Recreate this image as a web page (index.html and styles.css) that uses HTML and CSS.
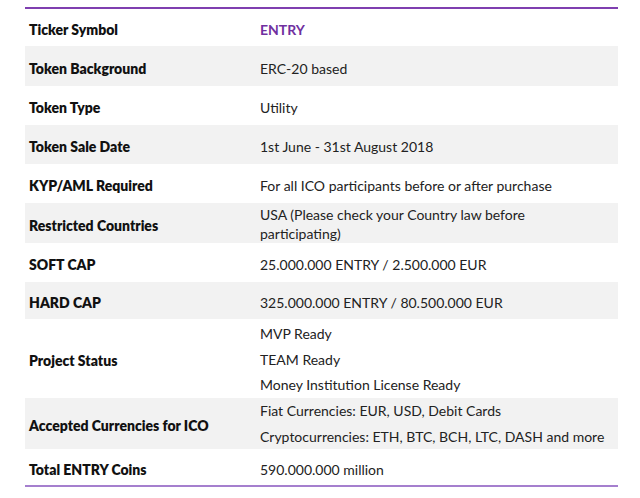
FILE: index.html
```html
<!DOCTYPE html>
<html>
<head>
<meta charset="utf-8">
<link rel="stylesheet" href="styles.css">
</head>
<body>
<table class="info">
  <tr class="r1"><th>Ticker Symbol</th><td class="accent">ENTRY</td></tr>
  <tr class="r2 alt"><th>Token Background</th><td>ERC-20 based</td></tr>
  <tr class="r3"><th>Token Type</th><td>Utility</td></tr>
  <tr class="r4 alt"><th>Token Sale Date</th><td>1st June - 31st August 2018</td></tr>
  <tr class="r5"><th>KYP/AML Required</th><td>For all ICO participants before or after purchase</td></tr>
  <tr class="r6 alt"><th>Restricted Countries</th><td class="multi"><div class="ln">USA (Please check your Country law before</div><div class="ln">participating)</div></td></tr>
  <tr class="r7"><th>SOFT CAP</th><td>25.000.000 ENTRY / 2.500.000 EUR</td></tr>
  <tr class="r8 alt"><th>HARD CAP</th><td>325.000.000 ENTRY / 80.500.000 EUR</td></tr>
  <tr class="r9"><th>Project Status</th><td class="multi"><div class="ml">MVP Ready</div><div class="ml">TEAM Ready</div><div class="ml">Money Institution License Ready</div></td></tr>
  <tr class="r10 alt"><th>Accepted Currencies for ICO</th><td class="multi flush"><div class="ml">Fiat Currencies: EUR, USD, Debit Cards</div><div class="ml">Cryptocurrencies: ETH, BTC, BCH, LTC, DASH and more</div></td></tr>
  <tr class="r11 last"><th>Total ENTRY Coins</th><td>590.000.000 million</td></tr>
</table>
</body>
</html>
```
FILE: styles.css
```css
html, body {
  margin: 0;
  padding: 0;
  background: #fff;
}
body {
  padding: 7px 0 0 25px;
  font-family: Lato, "Open Sans", sans-serif;
  font-size: 14px;
  color: #1a1a1a;
}
.info {
  width: 593px;
  border-collapse: collapse;
  border-top: 2px solid #7f3fb0;
  border-bottom: 2px solid #a57fce;
}
.info th, .info td {
  padding: 4px 4px 0;
  text-align: left;
  vertical-align: middle;
}
.info td.multi {
  padding-top: 2px;
}
.info td.flush {
  padding-top: 0;
}
.info th {
  width: 223px;
  font-weight: 800;
  color: #111;
}
.info td {
  color: #222;
}
.alt {
  background: #f2f2f2;
}
.info td.accent {
  color: #7030a0;
  font-weight: bold;
}
.r1 { height: 38px; }
.r2 { height: 40px; }
.r3, .r4, .r5 { height: 39px; }
.r6 { height: 40px; }
.r7 { height: 39px; }
.r8 { height: 37px; }
.r9 { height: 79px; }
.r10 { height: 51px; }
.r11 { height: 37px; }
.ln { line-height: 19px; }
.ml { line-height: 25.5px; }
```
